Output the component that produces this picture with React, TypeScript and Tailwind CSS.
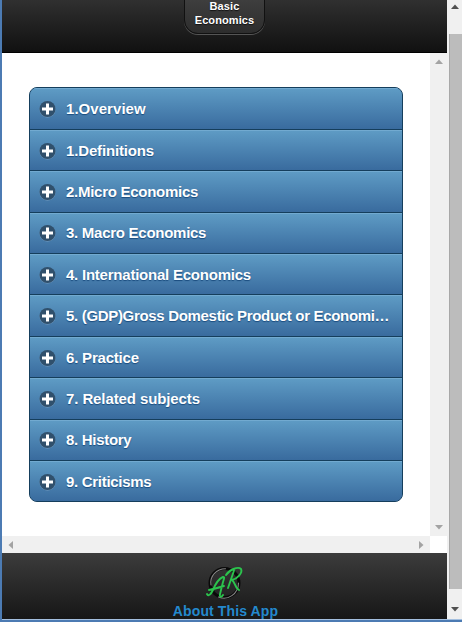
import clsx from "clsx";

const SECTIONS = [
    { title: "1.Overview", tracking: "tracking-[0.05px]" },
    { title: "1.Definitions", tracking: "tracking-[-0.15px]" },
    { title: "2.Micro Economics", tracking: "tracking-[-0.27px]" },
    { title: "3. Macro Economics", tracking: "tracking-[-0.27px]" },
    { title: "4. International Economics", tracking: "tracking-[-0.23px]" },
    { title: "5. (GDP)Gross Domestic Product or Economi…", tracking: "tracking-[-0.32px]" },
    { title: "6. Practice", tracking: "tracking-[-0.2px]" },
    { title: "7. Related subjects", tracking: "tracking-[-0.1px]" },
    { title: "8. History", tracking: "tracking-[-0.3px]" },
    { title: "9. Criticisms", tracking: "tracking-[-0.3px]" },
];

type Direction = "up" | "down" | "left" | "right";

const ARROWS: Record<Direction, string> = {
    up: "M0 5 4 0.5 8 5Z",
    down: "M0 0 4 4.5 8 0Z",
    left: "M5 0 0.5 4 5 8Z",
    right: "M0 0 4.5 4 0 8Z",
};

function Arrow({ direction, className }: { direction: Direction; className: string }) {
    const vertical = direction === "up" || direction === "down";
    return (
        <svg
            width={vertical ? 8 : 5}
            height={vertical ? 5 : 8}
            fill="currentColor"
            className={clsx("shrink-0", className)}
        >
            <path d={ARROWS[direction]} />
        </svg>
    );
}

function PlusIcon() {
    return (
        <svg width="18" height="18" viewBox="0 0 18 18" className="shrink-0">
            <circle cx="9.5" cy="9.7" r="8" fill="#fff" fillOpacity=".2" />
            <circle cx="9.5" cy="9" r="8" fill="#30506c" />
            <path d="M9.5 3.5v11M4 9h11" stroke="#fff" strokeWidth="3" />
        </svg>
    );
}

function Logo() {
    return (
        <svg
            width="38"
            height="36"
            viewBox="0 0 38 36"
            fill="none"
            strokeLinecap="round"
            strokeLinejoin="round"
            className="shrink-0"
        >
            <circle cx="18.5" cy="18" r="14.5" stroke="#090909" strokeWidth="3" />
            <path d="M5 20C3.5 11 10.5 4 19.5 3.8M12.5 32c9 4 20-3 20-14" stroke="#858585" strokeWidth="1.1" />
            {/* A */}
            <path d="M1 29c1.5 3 4 0 6-4 2-5 5-11 10-13 2-.5 1 2 0 5l-3 12c-.5 3 1 4 3 1M3 25c5-1 10-2.500 15-4" stroke="#2bc44d" strokeWidth="1.9" />
            {/* R */}
            <path d="M28 5.5 22 23M20 10c3-5 12-9 15-6 2 4-4 10-9 11 3 2 3 8 7 10" stroke="#2bc44d" strokeWidth="1.9" />
        </svg>
    );
}

function Section({ title, tracking }: { title: string; tracking: string }) {
    return (
        <li className="flex min-h-0 flex-1 items-center border-b border-[#153e5c] bg-linear-to-b from-[#5f9cc5] to-[#396b9e] pt-px pl-2 shadow-[inset_0_1px_0_#72aad0] last:border-b-0">
            <PlusIcon />
            <span
                className={clsx(
                    "ml-2.5 text-[15px] leading-5 font-bold whitespace-nowrap text-white [text-shadow:0_1px_1px_#194b7e]",
                    tracking
                )}
            >
                {title}
            </span>
        </li>
    );
}

export default function App() {
    return (
        <div className="flex h-[622px] w-[462px] flex-col overflow-hidden border-l-2 border-[#4c7bb3] bg-white font-['Liberation_Sans',Arial,sans-serif]">
            <div className="flex min-h-0 flex-1">
                <div className="flex w-[445px] flex-col">
                    <header className="flex h-[53px] shrink-0 items-start justify-center border-b border-black bg-linear-to-b from-[#303030] to-[#111]">
                        <div className="-mt-3 h-[46px] w-[81px] rounded-b-[14px] border border-[#111] bg-linear-to-b from-[#444] to-[#2d2d2d] pt-2.5 text-center text-[11px] leading-[14px] font-bold tracking-[0.1px] text-white shadow-[0_1px_0_#555] [text-shadow:0_1px_1px_#111]">
                            Basic
                            <br />
                            Economics
                        </div>
                    </header>

                    <main className="flex min-h-0 flex-1">
                        <div className="flex-1 pt-[34.4px] pl-[27px]">
                            <ul className="flex h-[415px] w-[374px] flex-col overflow-hidden rounded-lg border border-[#153e5c] bg-[#3f73a5]">
                                {SECTIONS.map((section) => (
                                    <Section key={section.title} {...section} />
                                ))}
                            </ul>
                        </div>
                        <div className="flex w-[17px] flex-col items-center justify-between bg-[#f0f0f0] py-1.5">
                            <Arrow direction="up" className="text-[#a3a3a3]" />
                            <Arrow direction="down" className="text-[#a3a3a3]" />
                        </div>
                    </main>

                    <div className="mr-[17px] flex h-[17px] shrink-0 items-center justify-between bg-[#f0f0f0] px-1.5">
                        <Arrow direction="left" className="text-[#a3a3a3]" />
                        <Arrow direction="right" className="text-[#a3a3a3]" />
                    </div>

                    <footer className="flex h-[66px] shrink-0 flex-col items-center bg-linear-to-b from-[#3c3c3c] to-[#171717] pt-3">
                        <Logo />
                        <span className="mt-px ml-0.5 text-sm leading-[18px] font-bold tracking-[0.12px] text-[#2489ce]">
                            About This App
                        </span>
                    </footer>
                </div>

                {/* Page scrollbar */}
                <div className="flex flex-1 flex-col items-center bg-[#f0f0f0] pt-1">
                    <Arrow direction="up" className="text-[#505050]" />
                    <div className="mt-[25px] ml-0.5 h-[555px] w-[13px] shrink-0 border-l border-[#a8a8a8] bg-[#bcbcbc]" />
                    <Arrow direction="down" className="mt-[18px] text-[#505050]" />
                </div>
            </div>
            <div className="h-[3px] shrink-0 border-t border-[#a5c0df] bg-[#4c7bb3]" />
        </div>
    );
}
